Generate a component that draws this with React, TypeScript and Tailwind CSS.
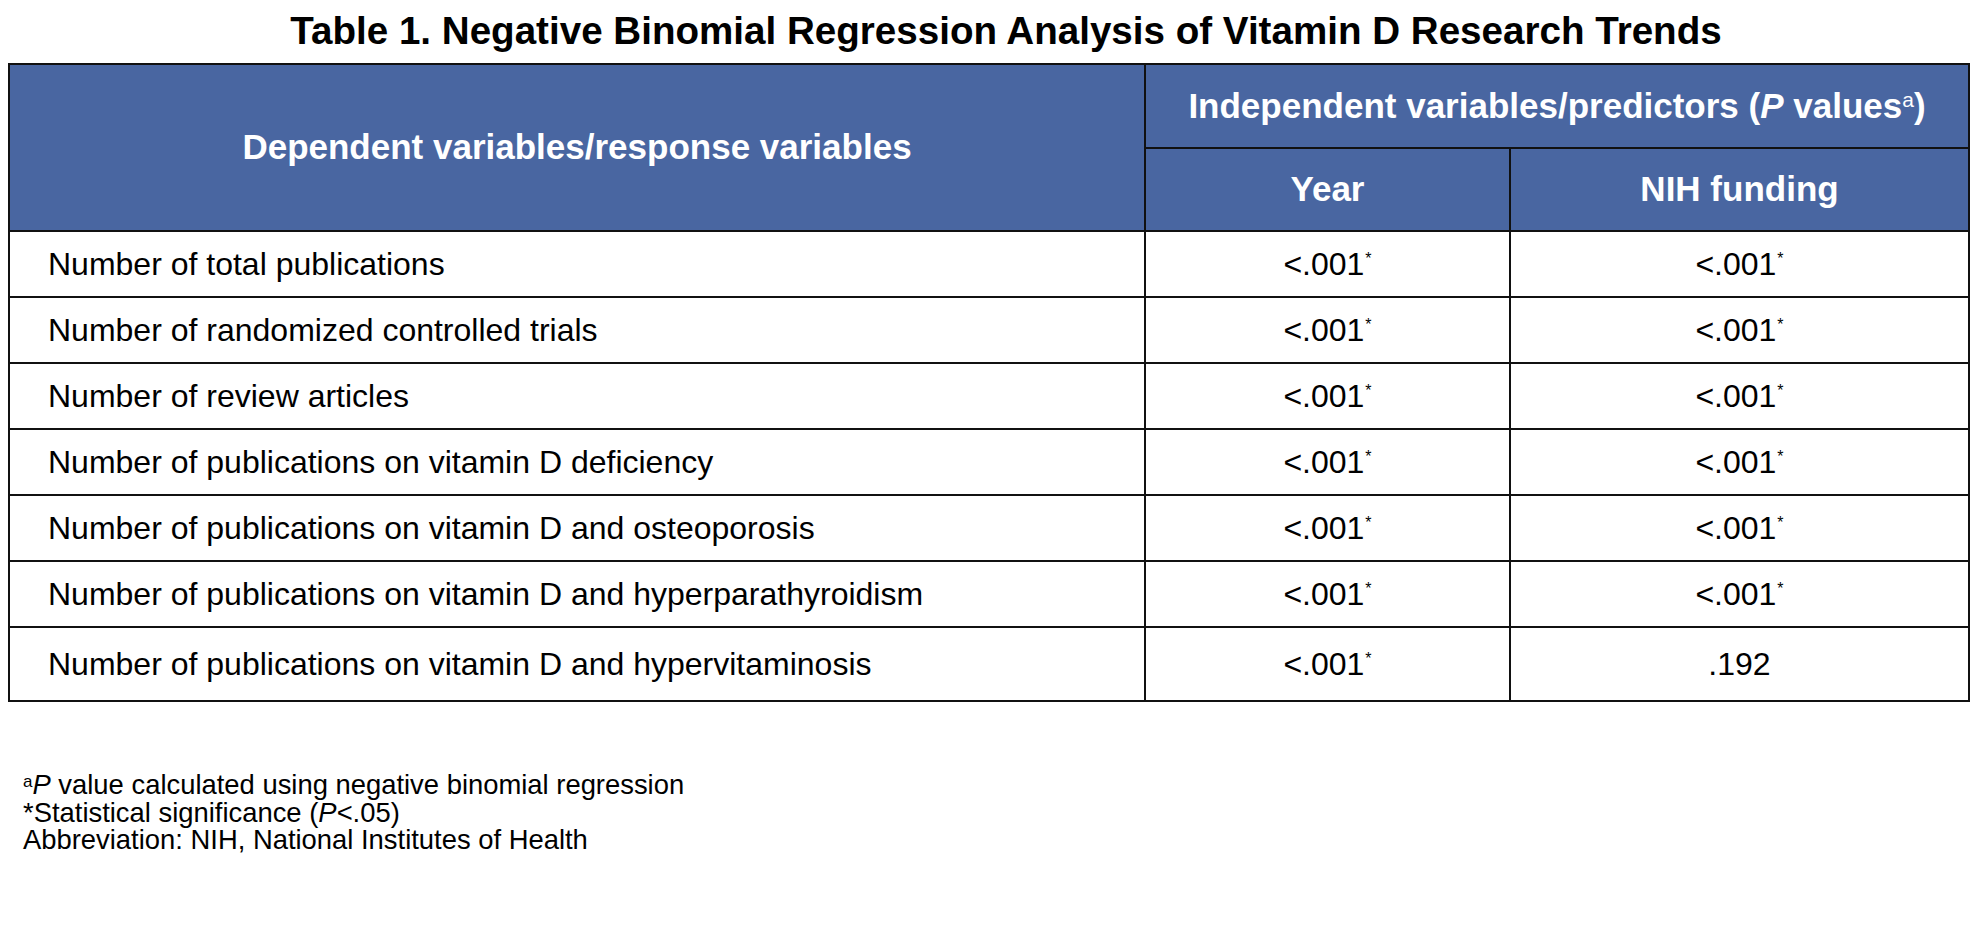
const rows: { label: string; year: string; nih: string; nihSig: boolean }[] = [
  { label: "Number of total publications", year: "<.001", nih: "<.001", nihSig: true },
  { label: "Number of randomized controlled trials", year: "<.001", nih: "<.001", nihSig: true },
  { label: "Number of review articles", year: "<.001", nih: "<.001", nihSig: true },
  { label: "Number of publications on vitamin D deficiency", year: "<.001", nih: "<.001", nihSig: true },
  { label: "Number of publications on vitamin D and osteoporosis", year: "<.001", nih: "<.001", nihSig: true },
  { label: "Number of publications on vitamin D and hyperparathyroidism", year: "<.001", nih: "<.001", nihSig: true },
  { label: "Number of publications on vitamin D and hypervitaminosis", year: "<.001", nih: ".192", nihSig: false },
];

function Value({ value, sig }: { value: string; sig: boolean }) {
  return (
    <span>
      {value}
      {sig && <span className="relative top-[-11px] ml-[1px] text-[16px] leading-none">*</span>}
    </span>
  );
}

export default function App() {
  return (
    <div className="min-h-[952px] w-[1970px] bg-white font-['Liberation_Sans',Arial,sans-serif] text-black">
      <h1 className="pt-[9px] pl-[42px] text-center text-[38.6px] font-bold leading-[44px]">
        Table 1. Negative Binomial Regression Analysis of Vitamin D Research Trends
      </h1>
      <table className="mt-[10px] ml-[8px] w-[1960px] table-fixed border-collapse border-2 border-[#111]">
        <colgroup>
          <col className="w-[1136px]" />
          <col className="w-[365px]" />
          <col className="w-[459px]" />
        </colgroup>
        <thead className="bg-[#4966a1] text-[35px] font-bold text-white">
          <tr className="h-[84px]">
            <th rowSpan={2} className="border-2 border-[#111] text-center font-bold">
              Dependent variables/response variables
            </th>
            <th colSpan={2} className="border-2 border-[#111] text-center font-bold">
              Independent variables/predictors (<i>P</i> values
              <span className="relative top-[-11px] text-[21px] font-normal leading-none">a</span>)
            </th>
          </tr>
          <tr className="h-[83px]">
            <th className="border-2 border-[#111] text-center font-bold">Year</th>
            <th className="border-2 border-[#111] text-center font-bold">NIH funding</th>
          </tr>
        </thead>
        <tbody className="text-[32px]">
          {rows.map((r, i) => (
            <tr key={r.label} className={i === rows.length - 1 ? "h-[74px]" : "h-[66px]"}>
              <td className="border-2 border-[#111] pl-[38px]">{r.label}</td>
              <td className="border-2 border-[#111] text-center">
                <Value value={r.year} sig />
              </td>
              <td className="border-2 border-[#111] text-center">
                <Value value={r.nih} sig={r.nihSig} />
              </td>
            </tr>
          ))}
        </tbody>
      </table>
      <div className="mt-[69px] pl-[23px] text-[27.4px] leading-[27.5px]">
        <p>
          <span className="relative top-[-7px] text-[17px] leading-none">a</span>
          <i>P</i> value calculated using negative binomial regression
        </p>
        <p>
          *Statistical significance (<i>P</i>&lt;.05)
        </p>
        <p>Abbreviation: NIH, National Institutes of Health</p>
      </div>
    </div>
  );
}
